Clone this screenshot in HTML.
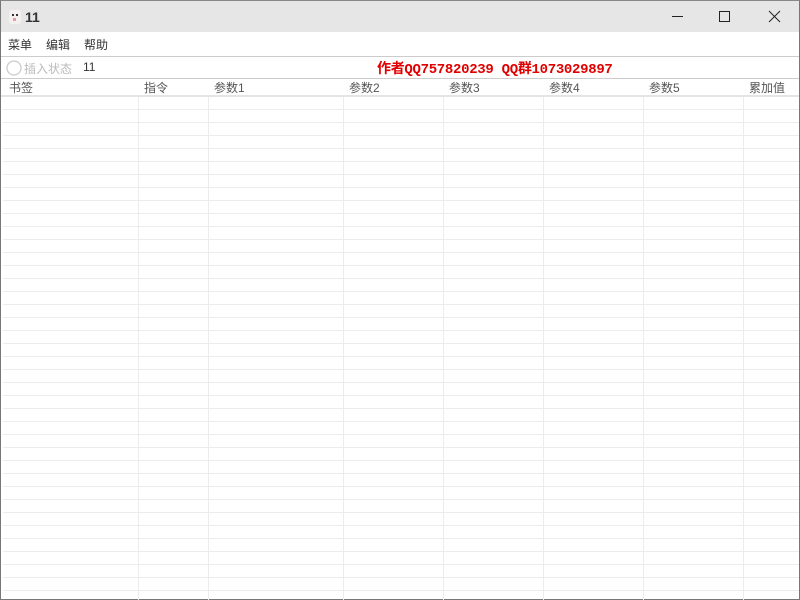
<!DOCTYPE html>
<html><head><meta charset="utf-8"><style>
*{margin:0;padding:0;box-sizing:border-box}
body{width:800px;height:600px;overflow:hidden;background:#fff;font-family:"Liberation Sans","Noto Sans CJK SC",sans-serif;font-size:12px;color:#333;position:relative}
.win{position:absolute;left:0;top:0;width:800px;height:600px;border:1px solid #777;border-top:1px solid #888}
.title{position:absolute;left:0;top:0;width:798px;height:31px;background:#e6e6e6}
.title .t{position:absolute;left:24px;top:8px;font-weight:bold;font-size:14px;color:#333}
.icon{position:absolute;left:8px;top:9px;width:12px;height:14px;background:#f4f0f0;border-radius:3px}
.icon:before{content:"";position:absolute;left:3px;top:4px;width:2px;height:2px;background:#333;box-shadow:4px 0 #333}
.icon:after{content:"";position:absolute;left:4px;top:8px;width:3px;height:3px;background:#e9a}
.ctl{position:absolute;top:0;width:46px;height:31px}
.menu{position:absolute;left:0;top:31px;width:798px;height:25px;border-bottom:1px solid #ccc;background:#fff}
.menu span{position:absolute;top:4px;font-size:12px;color:#333}
.tb{position:absolute;left:0;top:56px;width:798px;height:22px;border-bottom:1px solid #ccc}
.hdr{position:absolute;left:0;top:78px;width:798px;height:18px;border-bottom:2px solid #e4e4e4}
.hdr span{position:absolute;top:0px;color:#555;font-size:12px}
.grid{position:absolute;left:2px;top:96px;width:796px;height:503px;
background-image:repeating-linear-gradient(to bottom,transparent 0,transparent 12px,#ececec 12px,#ececec 13px)}
.col{position:absolute;top:96px;width:1px;height:503px;background:#ececec}
</style></head><body>
<div class="win">
<div class="title"><div class="icon"></div><div class="t">11</div>
<svg class="ctl" style="left:654px" viewBox="0 0 46 31"><line x1="17" y1="15.5" x2="28" y2="15.5" stroke="#222" stroke-width="1"/></svg>
<svg class="ctl" style="left:700px" viewBox="0 0 46 31"><rect x="18.5" y="10.5" width="10" height="10" fill="none" stroke="#222"/></svg>
<svg class="ctl" style="left:750px" viewBox="0 0 46 31"><path d="M18 10L29 21M29 10L18 21" stroke="#222" stroke-width="1"/></svg>
</div>
<div class="menu"><span style="left:7px">菜单</span><span style="left:45px">编辑</span><span style="left:83px">帮助</span></div>
<div class="tb">
<svg style="position:absolute;left:5px;top:3px" width="16" height="16"><circle cx="8" cy="8" r="7" fill="#fff" stroke="#ccc" stroke-width="1.3"/></svg>
<span style="position:absolute;left:23px;top:3px;color:#bbb">插入状态</span>
<span style="position:absolute;left:82px;top:3px;color:#333;font-size:12px">11</span>
<span style="position:absolute;left:376px;top:1px;color:#e00000;font-weight:bold;font-size:14px;font-family:'Liberation Mono','Noto Sans CJK SC',monospace;letter-spacing:-0.3px">作者QQ757820239 QQ群1073029897</span>
</div>
<div class="hdr"><span style="left:8px">书签</span><span style="left:143px">指令</span><span style="left:213px">参数1</span><span style="left:348px">参数2</span><span style="left:448px">参数3</span><span style="left:548px">参数4</span><span style="left:648px">参数5</span><span style="left:748px">累加值</span></div>
<div class="grid"></div>
<div class="col" style="left:137px"></div><div class="col" style="left:207px"></div><div class="col" style="left:342px"></div><div class="col" style="left:442px"></div><div class="col" style="left:542px"></div><div class="col" style="left:642px"></div><div class="col" style="left:742px"></div>
</div>
</body></html>
